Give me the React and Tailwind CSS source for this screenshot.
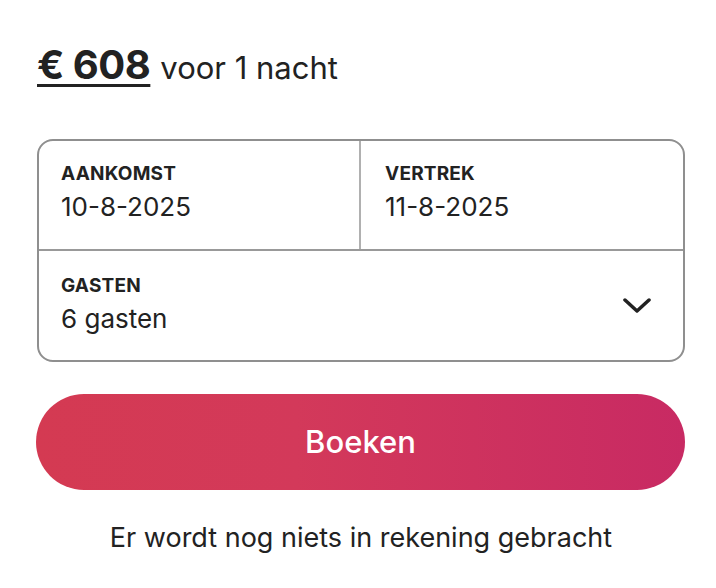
export default function App() {
  const font = { fontFamily: "Inter, 'Noto Sans', sans-serif" };
  return (
    <div className="w-[716px] h-[588px] bg-white text-[#222222]" style={font}>
      <div className="pl-[37px] pr-[31px] pt-[35px]">
        <div className="flex items-baseline h-[60px]">
          <span className="text-[40px] font-bold underline decoration-[3px] underline-offset-[5px] tracking-[-0.5px]">€ 608</span>
          <span className="text-[31px] ml-[10px]">voor 1 nacht</span>
        </div>
        <div className="mt-[44px] border-2 border-[#8f8f8f] rounded-[16px] overflow-hidden">
          <div className="flex h-[110px] border-b-2 border-[#999999]">
            <div className="w-[322px] border-r-2 border-[#b0b0b0] pl-[22px] pt-[21px]">
              <div className="text-[19px] font-bold leading-[24px] tracking-[0.2px]">AANKOMST</div>
              <div className="text-[26px] leading-[32px] mt-[5px]">10-8-2025</div>
            </div>
            <div className="flex-1 pl-[24px] pt-[21px]">
              <div className="text-[19px] font-bold leading-[24px] tracking-[0.2px]">VERTREK</div>
              <div className="text-[26px] leading-[32px] mt-[5px]">11-8-2025</div>
            </div>
          </div>
          <div className="flex items-center h-[109px] pl-[22px] pr-[32px]">
            <div className="flex-1 -mt-[2px]">
              <div className="text-[19px] font-bold leading-[24px] tracking-[0.2px]">GASTEN</div>
              <div className="text-[26px] leading-[32px] mt-[5px]">6 gasten</div>
            </div>
            <svg width="28" height="16" viewBox="0 0 28 16" fill="none">
              <path d="M2 2 L14 13 L26 2" stroke="#222222" strokeWidth="3.5" strokeLinecap="round" strokeLinejoin="round" />
            </svg>
          </div>
        </div>
        <button className="mt-[32px] w-[649px] -ml-[1px] h-[96px] rounded-full bg-[linear-gradient(to_right,#d43a52_0%,#d3395a_40%,#c82a63_100%)] text-white text-[31px] font-medium">
          Boeken
        </button>
        <div className="mt-[32px] text-center text-[27px] leading-[32px] w-[648px]">
          Er wordt nog niets in rekening gebracht
        </div>
      </div>
    </div>
  );
}
